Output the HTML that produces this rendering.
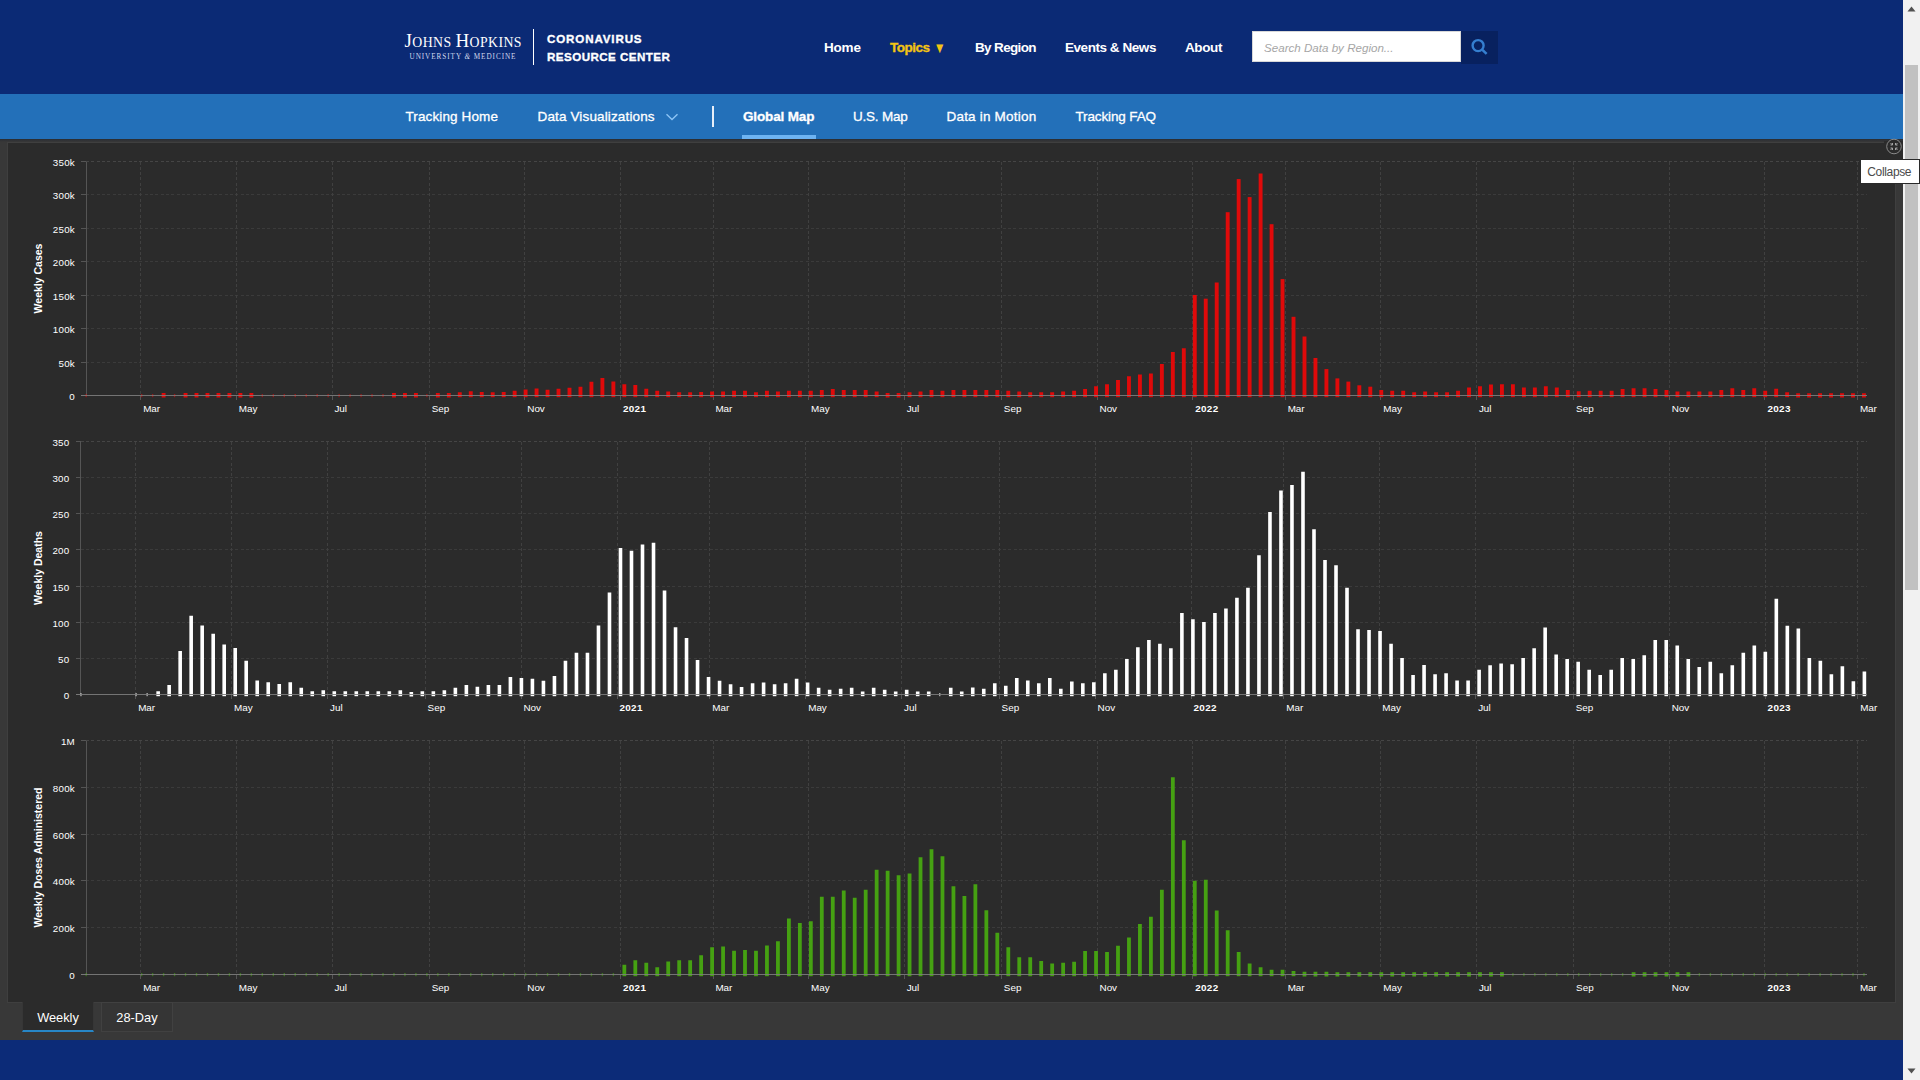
<!DOCTYPE html>
<html lang="en">
<head>
<meta charset="utf-8">
<title>COVID-19 Map - Johns Hopkins Coronavirus Resource Center</title>
<style>
html,body{margin:0;padding:0;}
body{width:1920px;height:1080px;overflow:hidden;position:relative;background:#383838;font-family:"Liberation Sans",sans-serif;color:#fff;}
.abs{position:absolute;}
#top{left:0;top:0;width:1903px;height:94px;background:#0b2a75;}
#sub{left:0;top:94px;width:1903px;height:45px;background:#2370b9;}
#shadow{left:0;top:139px;width:1903px;height:3px;background:linear-gradient(#2a2d33,#383838);}
#foot{left:0;top:1040px;width:1903px;height:40px;background:#0c2b78;}
#panel{left:7px;top:142px;width:1889px;height:861px;background:#2b2b2b;border:1px solid #3f3f3f;box-sizing:border-box;}
#scroll{left:1903px;top:0;width:17px;height:1080px;background:#f1f1f1;}
#thumb{left:1905px;top:65px;width:13px;height:525px;background:#c1c1c1;}
.nav1{top:39.5px;font-size:13.5px;font-weight:bold;line-height:16px;white-space:nowrap;letter-spacing:-0.2px;}
.nav2{top:108.5px;font-size:13.5px;line-height:16px;white-space:nowrap;letter-spacing:-0.15px;-webkit-text-stroke:0.3px #fff;}
.nav2.act{font-weight:bold;-webkit-text-stroke:0.3px #fff;}
svg text{font-family:"Liberation Sans",sans-serif;fill:#fff;}
.g{stroke:#3b3b3b;stroke-width:1;stroke-dasharray:3 2.33;shape-rendering:crispEdges;}
.g.t{stroke:#454545;}
.g.v{stroke:#404040;}
.a{stroke:#555555;stroke-width:1;shape-rendering:crispEdges;}
.a.x{stroke:#7c7c7c;opacity:0.9;}
.yl{font-size:9.8px;letter-spacing:0.25px;text-anchor:end;}
.xl{font-size:9.9px;}
.b{font-weight:bold;font-size:9.9px;letter-spacing:0.35px;}
.yt{font-size:10.5px;text-anchor:middle;font-weight:bold;}
.tab{top:1002px;height:30px;box-sizing:border-box;font-size:12.8px;line-height:31px;text-align:center;color:#fff;}
</style>
</head>
<body>
<div id="top" class="abs"></div>
<div id="sub" class="abs"></div>
<div id="shadow" class="abs"></div>

<!-- logo -->
<div class="abs" style="left:404.5px;top:32.3px;width:120px;height:18px;font-family:'Liberation Serif',serif;white-space:nowrap;line-height:18px;color:#fff;letter-spacing:0.42px;"><span style="font-size:19px;">J</span><span style="font-size:13.8px;">OHNS </span><span style="font-size:19px;">H</span><span style="font-size:13.8px;">OPKINS</span></div>
<div class="abs" style="left:409.5px;top:51.6px;width:110px;height:10px;font-family:'Liberation Serif',serif;font-size:7.2px;line-height:10px;white-space:nowrap;letter-spacing:0.94px;color:#d3daee;">UNIVERSITY <i>&amp;</i> MEDICINE</div>
<div class="abs" style="left:533px;top:29px;width:1px;height:36px;background:#fff;"></div>
<div class="abs" style="left:547px;top:30.3px;font-size:11.6px;font-weight:bold;-webkit-text-stroke:0.35px #fff;line-height:18px;white-space:nowrap;"><span style="letter-spacing:0.85px;">CORONAVIRUS</span><br><span style="letter-spacing:0.45px;">RESOURCE CENTER</span></div>

<!-- top nav -->
<div class="abs nav1" style="left:824px;">Home</div>
<div class="abs nav1" style="left:890px;color:#f2c413;letter-spacing:-0.5px;-webkit-text-stroke:0.35px #f2c413;">Topics <span style="font-size:12px;display:inline-block;transform:scale(1,1.25);position:relative;top:0.3px;letter-spacing:0;margin-left:1px;-webkit-text-stroke:0;">&#9660;</span></div>
<div class="abs nav1" style="left:975px;letter-spacing:-0.65px;">By Region</div>
<div class="abs nav1" style="left:1065px;letter-spacing:-0.45px;">Events &amp; News</div>
<div class="abs nav1" style="left:1185px;letter-spacing:-0.4px;">About</div>
<div class="abs" style="left:1252px;top:31px;width:209px;height:31px;background:#fff;box-sizing:border-box;border:1px solid #d8d8d8;"></div>
<div class="abs" style="left:1264px;top:39.6px;font-size:11.6px;font-style:italic;color:#a6a6a6;line-height:15px;white-space:nowrap;">Search Data by Region...</div>
<div class="abs" style="left:1461px;top:31px;width:37.3px;height:32.7px;background:#08215f;"></div>
<svg class="abs" style="left:1470px;top:38px;" width="20" height="20" viewBox="0 0 20 20"><circle cx="8.1" cy="7.6" r="5.5" fill="none" stroke="#357fd0" stroke-width="2.4"/><line x1="12.4" y1="11.9" x2="16.6" y2="15.9" stroke="#357fd0" stroke-width="2.6"/></svg>

<!-- sub nav -->
<div class="abs nav2" style="left:405.5px;letter-spacing:0.12px;">Tracking Home</div>
<div class="abs nav2" style="left:537.5px;letter-spacing:0.14px;">Data Visualizations</div>
<svg class="abs" style="left:664px;top:111px;" width="16" height="12" viewBox="0 0 16 12"><path d="M2.5 3.2 L8 8.5 L13.5 3.2" fill="none" stroke="#8cc4f5" stroke-width="1.4"/></svg>
<div class="abs" style="left:712px;top:106px;width:2px;height:21px;background:#e6eef8;"></div>
<div class="abs nav2 act" style="left:743px;">Global Map</div>
<div class="abs" style="left:742px;top:135px;width:74px;height:4px;background:#6db3f2;"></div>
<div class="abs nav2" style="left:853px;letter-spacing:-0.22px;">U.S. Map</div>
<div class="abs nav2" style="left:946.5px;letter-spacing:0.2px;">Data in Motion</div>
<div class="abs nav2" style="left:1075.5px;letter-spacing:-0.13px;">Tracking FAQ</div>

<!-- panel -->
<div id="panel" class="abs"></div>
<svg class="abs" style="left:0;top:0;" width="1903" height="1080" viewBox="0 0 1903 1080">
<line x1="81" y1="395.5" x2="86" y2="395.5" class="a"/>
<text x="75" y="400" class="yl">0</text>
<line x1="86" y1="362.07" x2="1866.5" y2="362.07" class="g"/>
<line x1="81" y1="362.07" x2="86" y2="362.07" class="a"/>
<text x="75" y="366.57" class="yl">50k</text>
<line x1="86" y1="328.64" x2="1866.5" y2="328.64" class="g"/>
<line x1="81" y1="328.64" x2="86" y2="328.64" class="a"/>
<text x="75" y="333.14" class="yl">100k</text>
<line x1="86" y1="295.21" x2="1866.5" y2="295.21" class="g"/>
<line x1="81" y1="295.21" x2="86" y2="295.21" class="a"/>
<text x="75" y="299.71" class="yl">150k</text>
<line x1="86" y1="261.79" x2="1866.5" y2="261.79" class="g"/>
<line x1="81" y1="261.79" x2="86" y2="261.79" class="a"/>
<text x="75" y="266.29" class="yl">200k</text>
<line x1="86" y1="228.36" x2="1866.5" y2="228.36" class="g"/>
<line x1="81" y1="228.36" x2="86" y2="228.36" class="a"/>
<text x="75" y="232.86" class="yl">250k</text>
<line x1="86" y1="194.93" x2="1866.5" y2="194.93" class="g"/>
<line x1="81" y1="194.93" x2="86" y2="194.93" class="a"/>
<text x="75" y="199.43" class="yl">300k</text>
<line x1="86" y1="161.5" x2="1866.5" y2="161.5" class="g t"/>
<line x1="81" y1="161.5" x2="86" y2="161.5" class="a"/>
<text x="75" y="166" class="yl">350k</text>
<line x1="140.75" y1="161.5" x2="140.75" y2="395.5" class="g v"/>
<line x1="140.75" y1="395.5" x2="140.75" y2="400" class="a"/>
<text x="143.15" y="412.2" class="xl">Mar</text>
<line x1="236.39" y1="161.5" x2="236.39" y2="395.5" class="g v"/>
<line x1="236.39" y1="395.5" x2="236.39" y2="400" class="a"/>
<text x="238.79" y="412.2" class="xl">May</text>
<line x1="332.02" y1="161.5" x2="332.02" y2="395.5" class="g v"/>
<line x1="332.02" y1="395.5" x2="332.02" y2="400" class="a"/>
<text x="334.42" y="412.2" class="xl">Jul</text>
<line x1="429.23" y1="161.5" x2="429.23" y2="395.5" class="g v"/>
<line x1="429.23" y1="395.5" x2="429.23" y2="400" class="a"/>
<text x="431.63" y="412.2" class="xl">Sep</text>
<line x1="524.86" y1="161.5" x2="524.86" y2="395.5" class="g v"/>
<line x1="524.86" y1="395.5" x2="524.86" y2="400" class="a"/>
<text x="527.26" y="412.2" class="xl">Nov</text>
<line x1="620.5" y1="161.5" x2="620.5" y2="395.5" class="g v"/>
<line x1="620.5" y1="395.5" x2="620.5" y2="400" class="a"/>
<text x="622.9" y="412.2" class="xl b">2021</text>
<line x1="713" y1="161.5" x2="713" y2="395.5" class="g v"/>
<line x1="713" y1="395.5" x2="713" y2="400" class="a"/>
<text x="715.4" y="412.2" class="xl">Mar</text>
<line x1="808.63" y1="161.5" x2="808.63" y2="395.5" class="g v"/>
<line x1="808.63" y1="395.5" x2="808.63" y2="400" class="a"/>
<text x="811.03" y="412.2" class="xl">May</text>
<line x1="904.27" y1="161.5" x2="904.27" y2="395.5" class="g v"/>
<line x1="904.27" y1="395.5" x2="904.27" y2="400" class="a"/>
<text x="906.67" y="412.2" class="xl">Jul</text>
<line x1="1001.47" y1="161.5" x2="1001.47" y2="395.5" class="g v"/>
<line x1="1001.47" y1="395.5" x2="1001.47" y2="400" class="a"/>
<text x="1003.87" y="412.2" class="xl">Sep</text>
<line x1="1097.11" y1="161.5" x2="1097.11" y2="395.5" class="g v"/>
<line x1="1097.11" y1="395.5" x2="1097.11" y2="400" class="a"/>
<text x="1099.51" y="412.2" class="xl">Nov</text>
<line x1="1192.74" y1="161.5" x2="1192.74" y2="395.5" class="g v"/>
<line x1="1192.74" y1="395.5" x2="1192.74" y2="400" class="a"/>
<text x="1195.14" y="412.2" class="xl b">2022</text>
<line x1="1285.24" y1="161.5" x2="1285.24" y2="395.5" class="g v"/>
<line x1="1285.24" y1="395.5" x2="1285.24" y2="400" class="a"/>
<text x="1287.64" y="412.2" class="xl">Mar</text>
<line x1="1380.88" y1="161.5" x2="1380.88" y2="395.5" class="g v"/>
<line x1="1380.88" y1="395.5" x2="1380.88" y2="400" class="a"/>
<text x="1383.28" y="412.2" class="xl">May</text>
<line x1="1476.52" y1="161.5" x2="1476.52" y2="395.5" class="g v"/>
<line x1="1476.52" y1="395.5" x2="1476.52" y2="400" class="a"/>
<text x="1478.92" y="412.2" class="xl">Jul</text>
<line x1="1573.72" y1="161.5" x2="1573.72" y2="395.5" class="g v"/>
<line x1="1573.72" y1="395.5" x2="1573.72" y2="400" class="a"/>
<text x="1576.12" y="412.2" class="xl">Sep</text>
<line x1="1669.36" y1="161.5" x2="1669.36" y2="395.5" class="g v"/>
<line x1="1669.36" y1="395.5" x2="1669.36" y2="400" class="a"/>
<text x="1671.76" y="412.2" class="xl">Nov</text>
<line x1="1764.99" y1="161.5" x2="1764.99" y2="395.5" class="g v"/>
<line x1="1764.99" y1="395.5" x2="1764.99" y2="400" class="a"/>
<text x="1767.39" y="412.2" class="xl b">2023</text>
<line x1="1857.49" y1="161.5" x2="1857.49" y2="395.5" class="g v"/>
<line x1="1857.49" y1="395.5" x2="1857.49" y2="400" class="a"/>
<text x="1859.89" y="412.2" class="xl">Mar</text>
<line x1="86" y1="161.5" x2="86" y2="395.5" class="a"/>
<text transform="translate(42,278.5) rotate(-90)" class="yt">Weekly Cases</text>
<g fill="#e00a0a">
<rect x="85.5" y="394" width="1.4" height="3.2" opacity="0.6"/>
<rect x="140.96" y="394" width="1.4" height="3.2" opacity="0.6"/>
<rect x="151.93" y="394" width="1.4" height="3.2" opacity="0.6"/>
<rect x="161.65" y="393" width="3.9" height="4.5"/>
<rect x="173.87" y="394" width="1.4" height="3.2" opacity="0.6"/>
<rect x="183.59" y="393" width="3.9" height="4.5"/>
<rect x="194.56" y="393" width="3.9" height="4.5"/>
<rect x="205.53" y="393" width="3.9" height="4.5"/>
<rect x="216.5" y="393" width="3.9" height="4.5"/>
<rect x="227.47" y="393" width="3.9" height="4.5"/>
<rect x="238.44" y="393" width="3.9" height="4.5"/>
<rect x="249.41" y="393" width="3.9" height="4.5"/>
<rect x="261.63" y="394" width="1.4" height="3.2" opacity="0.6"/>
<rect x="272.6" y="394" width="1.4" height="3.2" opacity="0.6"/>
<rect x="283.57" y="394" width="1.4" height="3.2" opacity="0.6"/>
<rect x="294.54" y="394" width="1.4" height="3.2" opacity="0.6"/>
<rect x="305.51" y="394" width="1.4" height="3.2" opacity="0.6"/>
<rect x="316.48" y="394" width="1.4" height="3.2" opacity="0.6"/>
<rect x="327.45" y="394" width="1.4" height="3.2" opacity="0.6"/>
<rect x="338.42" y="394" width="1.4" height="3.2" opacity="0.6"/>
<rect x="349.39" y="394" width="1.4" height="3.2" opacity="0.6"/>
<rect x="360.36" y="394" width="1.4" height="3.2" opacity="0.6"/>
<rect x="371.33" y="394" width="1.4" height="3.2" opacity="0.6"/>
<rect x="382.3" y="394" width="1.4" height="3.2" opacity="0.6"/>
<rect x="392.02" y="393" width="3.9" height="4.5"/>
<rect x="402.99" y="393" width="3.9" height="4.5"/>
<rect x="413.96" y="393" width="3.9" height="4.5"/>
<rect x="426.18" y="394" width="1.4" height="3.2" opacity="0.6"/>
<rect x="435.9" y="393" width="3.9" height="4.5"/>
<rect x="446.87" y="393" width="3.9" height="4.5"/>
<rect x="457.84" y="392.25" width="3.9" height="4.95"/>
<rect x="468.81" y="391.25" width="3.9" height="5.95"/>
<rect x="479.78" y="392" width="3.9" height="5.2"/>
<rect x="490.75" y="392.25" width="3.9" height="4.95"/>
<rect x="501.72" y="392" width="3.9" height="5.2"/>
<rect x="512.69" y="390.75" width="3.9" height="6.45"/>
<rect x="523.66" y="389.5" width="3.9" height="7.7"/>
<rect x="534.63" y="388.5" width="3.9" height="8.7"/>
<rect x="545.6" y="389.75" width="3.9" height="7.45"/>
<rect x="556.57" y="388.75" width="3.9" height="8.45"/>
<rect x="567.54" y="387.75" width="3.9" height="9.45"/>
<rect x="578.51" y="386.75" width="3.9" height="10.45"/>
<rect x="589.48" y="381.75" width="3.9" height="15.45"/>
<rect x="600.45" y="378" width="3.9" height="19.2"/>
<rect x="611.42" y="381.5" width="3.9" height="15.7"/>
<rect x="622.39" y="384.25" width="3.9" height="12.95"/>
<rect x="633.36" y="385" width="3.9" height="12.2"/>
<rect x="644.33" y="388.75" width="3.9" height="8.45"/>
<rect x="655.3" y="390.75" width="3.9" height="6.45"/>
<rect x="666.27" y="391.5" width="3.9" height="5.7"/>
<rect x="677.24" y="392.25" width="3.9" height="4.95"/>
<rect x="688.21" y="392.25" width="3.9" height="4.95"/>
<rect x="699.18" y="392" width="3.9" height="5.2"/>
<rect x="710.15" y="391.5" width="3.9" height="5.7"/>
<rect x="721.12" y="391.5" width="3.9" height="5.7"/>
<rect x="732.09" y="390.75" width="3.9" height="6.45"/>
<rect x="743.06" y="390.75" width="3.9" height="6.45"/>
<rect x="754.03" y="392.25" width="3.9" height="4.95"/>
<rect x="765" y="390.75" width="3.9" height="6.45"/>
<rect x="775.97" y="391.5" width="3.9" height="5.7"/>
<rect x="786.94" y="390.75" width="3.9" height="6.45"/>
<rect x="797.91" y="390.75" width="3.9" height="6.45"/>
<rect x="808.88" y="390.75" width="3.9" height="6.45"/>
<rect x="819.85" y="390" width="3.9" height="7.2"/>
<rect x="830.82" y="389" width="3.9" height="8.2"/>
<rect x="841.79" y="390" width="3.9" height="7.2"/>
<rect x="852.76" y="390" width="3.9" height="7.2"/>
<rect x="863.73" y="390" width="3.9" height="7.2"/>
<rect x="874.7" y="391.5" width="3.9" height="5.7"/>
<rect x="885.67" y="393" width="3.9" height="4.5"/>
<rect x="896.64" y="393" width="3.9" height="4.5"/>
<rect x="907.61" y="392.25" width="3.9" height="4.95"/>
<rect x="918.58" y="391.5" width="3.9" height="5.7"/>
<rect x="929.55" y="390" width="3.9" height="7.2"/>
<rect x="940.52" y="390.75" width="3.9" height="6.45"/>
<rect x="951.49" y="390" width="3.9" height="7.2"/>
<rect x="962.46" y="390" width="3.9" height="7.2"/>
<rect x="973.43" y="390" width="3.9" height="7.2"/>
<rect x="984.4" y="390" width="3.9" height="7.2"/>
<rect x="995.37" y="390" width="3.9" height="7.2"/>
<rect x="1006.34" y="390.75" width="3.9" height="6.45"/>
<rect x="1017.31" y="391.5" width="3.9" height="5.7"/>
<rect x="1028.28" y="392.25" width="3.9" height="4.95"/>
<rect x="1039.25" y="392.25" width="3.9" height="4.95"/>
<rect x="1050.22" y="392.25" width="3.9" height="4.95"/>
<rect x="1061.19" y="391.5" width="3.9" height="5.7"/>
<rect x="1072.16" y="390.75" width="3.9" height="6.45"/>
<rect x="1083.13" y="389" width="3.9" height="8.2"/>
<rect x="1094.1" y="386.25" width="3.9" height="10.95"/>
<rect x="1105.07" y="384.25" width="3.9" height="12.95"/>
<rect x="1116.04" y="380" width="3.9" height="17.2"/>
<rect x="1127.01" y="376.25" width="3.9" height="20.95"/>
<rect x="1137.98" y="374.5" width="3.9" height="22.7"/>
<rect x="1148.95" y="373.5" width="3.9" height="23.7"/>
<rect x="1159.92" y="364" width="3.9" height="33.2"/>
<rect x="1170.89" y="352" width="3.9" height="45.2"/>
<rect x="1181.86" y="348.25" width="3.9" height="48.95"/>
<rect x="1192.83" y="295" width="3.9" height="102.2"/>
<rect x="1203.8" y="298.7" width="3.9" height="98.5"/>
<rect x="1214.77" y="282.5" width="3.9" height="114.7"/>
<rect x="1225.74" y="212.2" width="3.9" height="185"/>
<rect x="1236.71" y="179.1" width="3.9" height="218.1"/>
<rect x="1247.68" y="197.1" width="3.9" height="200.1"/>
<rect x="1258.65" y="173.5" width="3.9" height="223.7"/>
<rect x="1269.62" y="224.2" width="3.9" height="173"/>
<rect x="1280.59" y="279.1" width="3.9" height="118.1"/>
<rect x="1291.56" y="316.8" width="3.9" height="80.4"/>
<rect x="1302.53" y="336.5" width="3.9" height="60.7"/>
<rect x="1313.5" y="358" width="3.9" height="39.2"/>
<rect x="1324.47" y="369.1" width="3.9" height="28.1"/>
<rect x="1335.44" y="378.4" width="3.9" height="18.8"/>
<rect x="1346.41" y="381.6" width="3.9" height="15.6"/>
<rect x="1357.38" y="385.3" width="3.9" height="11.9"/>
<rect x="1368.35" y="386.7" width="3.9" height="10.5"/>
<rect x="1379.32" y="390" width="3.9" height="7.2"/>
<rect x="1390.29" y="390.75" width="3.9" height="6.45"/>
<rect x="1401.26" y="390.75" width="3.9" height="6.45"/>
<rect x="1412.23" y="392.25" width="3.9" height="4.95"/>
<rect x="1423.2" y="391.5" width="3.9" height="5.7"/>
<rect x="1434.17" y="392.25" width="3.9" height="4.95"/>
<rect x="1445.14" y="392.25" width="3.9" height="4.95"/>
<rect x="1456.11" y="390.75" width="3.9" height="6.45"/>
<rect x="1467.08" y="387.5" width="3.9" height="9.7"/>
<rect x="1478.05" y="386.25" width="3.9" height="10.95"/>
<rect x="1489.02" y="384.5" width="3.9" height="12.7"/>
<rect x="1499.99" y="384.25" width="3.9" height="12.95"/>
<rect x="1510.96" y="384.25" width="3.9" height="12.95"/>
<rect x="1521.93" y="387.5" width="3.9" height="9.7"/>
<rect x="1532.9" y="387.5" width="3.9" height="9.7"/>
<rect x="1543.87" y="386.25" width="3.9" height="10.95"/>
<rect x="1554.84" y="387.5" width="3.9" height="9.7"/>
<rect x="1565.81" y="390" width="3.9" height="7.2"/>
<rect x="1576.78" y="391.25" width="3.9" height="5.95"/>
<rect x="1587.75" y="390.75" width="3.9" height="6.45"/>
<rect x="1598.72" y="390.75" width="3.9" height="6.45"/>
<rect x="1609.69" y="390.75" width="3.9" height="6.45"/>
<rect x="1620.66" y="389" width="3.9" height="8.2"/>
<rect x="1631.63" y="388.25" width="3.9" height="8.95"/>
<rect x="1642.6" y="388.25" width="3.9" height="8.95"/>
<rect x="1653.57" y="389" width="3.9" height="8.2"/>
<rect x="1664.54" y="390" width="3.9" height="7.2"/>
<rect x="1675.51" y="391.5" width="3.9" height="5.7"/>
<rect x="1686.48" y="391.5" width="3.9" height="5.7"/>
<rect x="1697.45" y="391.5" width="3.9" height="5.7"/>
<rect x="1708.42" y="391.5" width="3.9" height="5.7"/>
<rect x="1719.39" y="390" width="3.9" height="7.2"/>
<rect x="1730.36" y="388.25" width="3.9" height="8.95"/>
<rect x="1741.33" y="390" width="3.9" height="7.2"/>
<rect x="1752.3" y="388.25" width="3.9" height="8.95"/>
<rect x="1763.27" y="390.75" width="3.9" height="6.45"/>
<rect x="1774.24" y="388.75" width="3.9" height="8.45"/>
<rect x="1785.21" y="392.25" width="3.9" height="4.95"/>
<rect x="1796.18" y="393.25" width="3.9" height="4.25"/>
<rect x="1807.15" y="393.25" width="3.9" height="4.25"/>
<rect x="1818.12" y="393.25" width="3.9" height="4.25"/>
<rect x="1829.09" y="393.25" width="3.9" height="4.25"/>
<rect x="1840.06" y="393.25" width="3.9" height="4.25"/>
<rect x="1851.03" y="393.25" width="3.9" height="4.25"/>
<rect x="1862" y="393.25" width="3.9" height="4.25"/>
</g>
<line x1="81" y1="395.5" x2="1866.5" y2="395.5" class="a x"/>
<line x1="75.75" y1="694.5" x2="80.75" y2="694.5" class="a"/>
<text x="69.5" y="699" class="yl">0</text>
<line x1="80.75" y1="658.36" x2="1866.5" y2="658.36" class="g"/>
<line x1="75.75" y1="658.36" x2="80.75" y2="658.36" class="a"/>
<text x="69.5" y="662.86" class="yl">50</text>
<line x1="80.75" y1="622.21" x2="1866.5" y2="622.21" class="g"/>
<line x1="75.75" y1="622.21" x2="80.75" y2="622.21" class="a"/>
<text x="69.5" y="626.71" class="yl">100</text>
<line x1="80.75" y1="586.07" x2="1866.5" y2="586.07" class="g"/>
<line x1="75.75" y1="586.07" x2="80.75" y2="586.07" class="a"/>
<text x="69.5" y="590.57" class="yl">150</text>
<line x1="80.75" y1="549.93" x2="1866.5" y2="549.93" class="g"/>
<line x1="75.75" y1="549.93" x2="80.75" y2="549.93" class="a"/>
<text x="69.5" y="554.43" class="yl">200</text>
<line x1="80.75" y1="513.79" x2="1866.5" y2="513.79" class="g"/>
<line x1="75.75" y1="513.79" x2="80.75" y2="513.79" class="a"/>
<text x="69.5" y="518.29" class="yl">250</text>
<line x1="80.75" y1="477.64" x2="1866.5" y2="477.64" class="g"/>
<line x1="75.75" y1="477.64" x2="80.75" y2="477.64" class="a"/>
<text x="69.5" y="482.14" class="yl">300</text>
<line x1="80.75" y1="441.5" x2="1866.5" y2="441.5" class="g t"/>
<line x1="75.75" y1="441.5" x2="80.75" y2="441.5" class="a"/>
<text x="69.5" y="446" class="yl">350</text>
<line x1="135.75" y1="441.5" x2="135.75" y2="694.5" class="g v"/>
<line x1="135.75" y1="694.5" x2="135.75" y2="699" class="a"/>
<text x="138.15" y="711.2" class="xl">Mar</text>
<line x1="231.69" y1="441.5" x2="231.69" y2="694.5" class="g v"/>
<line x1="231.69" y1="694.5" x2="231.69" y2="699" class="a"/>
<text x="234.09" y="711.2" class="xl">May</text>
<line x1="327.63" y1="441.5" x2="327.63" y2="694.5" class="g v"/>
<line x1="327.63" y1="694.5" x2="327.63" y2="699" class="a"/>
<text x="330.03" y="711.2" class="xl">Jul</text>
<line x1="425.15" y1="441.5" x2="425.15" y2="694.5" class="g v"/>
<line x1="425.15" y1="694.5" x2="425.15" y2="699" class="a"/>
<text x="427.55" y="711.2" class="xl">Sep</text>
<line x1="521.09" y1="441.5" x2="521.09" y2="694.5" class="g v"/>
<line x1="521.09" y1="694.5" x2="521.09" y2="699" class="a"/>
<text x="523.49" y="711.2" class="xl">Nov</text>
<line x1="617.03" y1="441.5" x2="617.03" y2="694.5" class="g v"/>
<line x1="617.03" y1="694.5" x2="617.03" y2="699" class="a"/>
<text x="619.43" y="711.2" class="xl b">2021</text>
<line x1="709.82" y1="441.5" x2="709.82" y2="694.5" class="g v"/>
<line x1="709.82" y1="694.5" x2="709.82" y2="699" class="a"/>
<text x="712.22" y="711.2" class="xl">Mar</text>
<line x1="805.76" y1="441.5" x2="805.76" y2="694.5" class="g v"/>
<line x1="805.76" y1="694.5" x2="805.76" y2="699" class="a"/>
<text x="808.16" y="711.2" class="xl">May</text>
<line x1="901.7" y1="441.5" x2="901.7" y2="694.5" class="g v"/>
<line x1="901.7" y1="694.5" x2="901.7" y2="699" class="a"/>
<text x="904.1" y="711.2" class="xl">Jul</text>
<line x1="999.22" y1="441.5" x2="999.22" y2="694.5" class="g v"/>
<line x1="999.22" y1="694.5" x2="999.22" y2="699" class="a"/>
<text x="1001.62" y="711.2" class="xl">Sep</text>
<line x1="1095.16" y1="441.5" x2="1095.16" y2="694.5" class="g v"/>
<line x1="1095.16" y1="694.5" x2="1095.16" y2="699" class="a"/>
<text x="1097.56" y="711.2" class="xl">Nov</text>
<line x1="1191.1" y1="441.5" x2="1191.1" y2="694.5" class="g v"/>
<line x1="1191.1" y1="694.5" x2="1191.1" y2="699" class="a"/>
<text x="1193.5" y="711.2" class="xl b">2022</text>
<line x1="1283.89" y1="441.5" x2="1283.89" y2="694.5" class="g v"/>
<line x1="1283.89" y1="694.5" x2="1283.89" y2="699" class="a"/>
<text x="1286.29" y="711.2" class="xl">Mar</text>
<line x1="1379.83" y1="441.5" x2="1379.83" y2="694.5" class="g v"/>
<line x1="1379.83" y1="694.5" x2="1379.83" y2="699" class="a"/>
<text x="1382.23" y="711.2" class="xl">May</text>
<line x1="1475.78" y1="441.5" x2="1475.78" y2="694.5" class="g v"/>
<line x1="1475.78" y1="694.5" x2="1475.78" y2="699" class="a"/>
<text x="1478.18" y="711.2" class="xl">Jul</text>
<line x1="1573.29" y1="441.5" x2="1573.29" y2="694.5" class="g v"/>
<line x1="1573.29" y1="694.5" x2="1573.29" y2="699" class="a"/>
<text x="1575.69" y="711.2" class="xl">Sep</text>
<line x1="1669.23" y1="441.5" x2="1669.23" y2="694.5" class="g v"/>
<line x1="1669.23" y1="694.5" x2="1669.23" y2="699" class="a"/>
<text x="1671.63" y="711.2" class="xl">Nov</text>
<line x1="1765.17" y1="441.5" x2="1765.17" y2="694.5" class="g v"/>
<line x1="1765.17" y1="694.5" x2="1765.17" y2="699" class="a"/>
<text x="1767.57" y="711.2" class="xl b">2023</text>
<line x1="1857.97" y1="441.5" x2="1857.97" y2="694.5" class="g v"/>
<line x1="1857.97" y1="694.5" x2="1857.97" y2="699" class="a"/>
<text x="1860.37" y="711.2" class="xl">Mar</text>
<line x1="80.75" y1="441.5" x2="80.75" y2="694.5" class="a"/>
<text transform="translate(42,568) rotate(-90)" class="yt">Weekly Deaths</text>
<g fill="#ffffff">
<rect x="80.25" y="693" width="1.4" height="3.2" opacity="0.6"/>
<rect x="135.43" y="693" width="1.4" height="3.2" opacity="0.6"/>
<rect x="146.44" y="693" width="1.4" height="3.2" opacity="0.6"/>
<rect x="156.35" y="691.25" width="3.6" height="4.95"/>
<rect x="167.36" y="685" width="3.6" height="11.2"/>
<rect x="178.37" y="651" width="3.6" height="45.2"/>
<rect x="189.37" y="615.75" width="3.6" height="80.45"/>
<rect x="200.38" y="625.5" width="3.6" height="70.7"/>
<rect x="211.39" y="633.75" width="3.6" height="62.45"/>
<rect x="222.4" y="644.5" width="3.6" height="51.7"/>
<rect x="233.41" y="648" width="3.6" height="48.2"/>
<rect x="244.41" y="660.75" width="3.6" height="35.45"/>
<rect x="255.42" y="680.5" width="3.6" height="15.7"/>
<rect x="266.43" y="682.25" width="3.6" height="13.95"/>
<rect x="277.44" y="684" width="3.6" height="12.2"/>
<rect x="288.45" y="682.25" width="3.6" height="13.95"/>
<rect x="299.45" y="687.75" width="3.6" height="8.45"/>
<rect x="310.46" y="691.25" width="3.6" height="4.95"/>
<rect x="321.47" y="690.25" width="3.6" height="5.95"/>
<rect x="332.48" y="691.25" width="3.6" height="4.95"/>
<rect x="343.49" y="691.25" width="3.6" height="4.95"/>
<rect x="354.49" y="691.25" width="3.6" height="4.95"/>
<rect x="365.5" y="691.25" width="3.6" height="4.95"/>
<rect x="376.51" y="691.25" width="3.6" height="4.95"/>
<rect x="387.52" y="691.25" width="3.6" height="4.95"/>
<rect x="398.53" y="690.25" width="3.6" height="5.95"/>
<rect x="409.53" y="692" width="3.6" height="4.5"/>
<rect x="420.54" y="691.25" width="3.6" height="4.95"/>
<rect x="431.55" y="691.25" width="3.6" height="4.95"/>
<rect x="442.56" y="690.25" width="3.6" height="5.95"/>
<rect x="453.57" y="687.75" width="3.6" height="8.45"/>
<rect x="464.57" y="685" width="3.6" height="11.2"/>
<rect x="475.58" y="686.75" width="3.6" height="9.45"/>
<rect x="486.59" y="685" width="3.6" height="11.2"/>
<rect x="497.6" y="685" width="3.6" height="11.2"/>
<rect x="508.61" y="677" width="3.6" height="19.2"/>
<rect x="519.61" y="678" width="3.6" height="18.2"/>
<rect x="530.62" y="678.75" width="3.6" height="17.45"/>
<rect x="541.63" y="680.75" width="3.6" height="15.45"/>
<rect x="552.64" y="676" width="3.6" height="20.2"/>
<rect x="563.65" y="660.75" width="3.6" height="35.45"/>
<rect x="574.65" y="652.75" width="3.6" height="43.45"/>
<rect x="585.66" y="652.75" width="3.6" height="43.45"/>
<rect x="596.67" y="625.5" width="3.6" height="70.7"/>
<rect x="607.68" y="592.5" width="3.6" height="103.7"/>
<rect x="618.69" y="548" width="3.6" height="148.2"/>
<rect x="629.69" y="550.75" width="3.6" height="145.45"/>
<rect x="640.7" y="544.5" width="3.6" height="151.7"/>
<rect x="651.71" y="542.75" width="3.6" height="153.45"/>
<rect x="662.72" y="590.5" width="3.6" height="105.7"/>
<rect x="673.73" y="627.25" width="3.6" height="68.95"/>
<rect x="684.73" y="638" width="3.6" height="58.2"/>
<rect x="695.74" y="660" width="3.6" height="36.2"/>
<rect x="706.75" y="677" width="3.6" height="19.2"/>
<rect x="717.76" y="680.75" width="3.6" height="15.45"/>
<rect x="728.77" y="684.25" width="3.6" height="11.95"/>
<rect x="739.77" y="687" width="3.6" height="9.2"/>
<rect x="750.78" y="683.25" width="3.6" height="12.95"/>
<rect x="761.79" y="682.5" width="3.6" height="13.7"/>
<rect x="772.8" y="684.25" width="3.6" height="11.95"/>
<rect x="783.81" y="683.25" width="3.6" height="12.95"/>
<rect x="794.81" y="678.75" width="3.6" height="17.45"/>
<rect x="805.82" y="682.5" width="3.6" height="13.7"/>
<rect x="816.83" y="687.75" width="3.6" height="8.45"/>
<rect x="827.84" y="689.75" width="3.6" height="6.45"/>
<rect x="838.85" y="688.75" width="3.6" height="7.45"/>
<rect x="849.85" y="687.75" width="3.6" height="8.45"/>
<rect x="860.86" y="691.5" width="3.6" height="4.7"/>
<rect x="871.87" y="687.75" width="3.6" height="8.45"/>
<rect x="882.88" y="689.75" width="3.6" height="6.45"/>
<rect x="893.89" y="691.5" width="3.6" height="4.7"/>
<rect x="904.89" y="689.75" width="3.6" height="6.45"/>
<rect x="915.9" y="691.5" width="3.6" height="4.7"/>
<rect x="926.91" y="691.5" width="3.6" height="4.7"/>
<rect x="939.02" y="693" width="1.4" height="3.2" opacity="0.6"/>
<rect x="948.93" y="687.75" width="3.6" height="8.45"/>
<rect x="959.93" y="691.5" width="3.6" height="4.7"/>
<rect x="970.94" y="687.5" width="3.6" height="8.7"/>
<rect x="981.95" y="688.75" width="3.6" height="7.45"/>
<rect x="992.96" y="683.25" width="3.6" height="12.95"/>
<rect x="1003.97" y="685.75" width="3.6" height="10.45"/>
<rect x="1014.97" y="678" width="3.6" height="18.2"/>
<rect x="1025.98" y="680.5" width="3.6" height="15.7"/>
<rect x="1036.99" y="683.25" width="3.6" height="12.95"/>
<rect x="1048" y="678" width="3.6" height="18.2"/>
<rect x="1059.01" y="688.75" width="3.6" height="7.45"/>
<rect x="1070.01" y="681.5" width="3.6" height="14.7"/>
<rect x="1081.02" y="683.25" width="3.6" height="12.95"/>
<rect x="1092.03" y="682.25" width="3.6" height="13.95"/>
<rect x="1103.04" y="673.25" width="3.6" height="22.95"/>
<rect x="1114.05" y="669.75" width="3.6" height="26.45"/>
<rect x="1125.05" y="659" width="3.6" height="37.2"/>
<rect x="1136.06" y="647.25" width="3.6" height="48.95"/>
<rect x="1147.07" y="640" width="3.6" height="56.2"/>
<rect x="1158.08" y="643.75" width="3.6" height="52.45"/>
<rect x="1169.09" y="648.25" width="3.6" height="47.95"/>
<rect x="1180.09" y="613" width="3.6" height="83.2"/>
<rect x="1191.1" y="619.25" width="3.6" height="76.95"/>
<rect x="1202.11" y="622" width="3.6" height="74.2"/>
<rect x="1213.12" y="613" width="3.6" height="83.2"/>
<rect x="1224.13" y="608.5" width="3.6" height="87.7"/>
<rect x="1235.13" y="597.75" width="3.6" height="98.45"/>
<rect x="1246.14" y="587.75" width="3.6" height="108.45"/>
<rect x="1257.15" y="555.25" width="3.6" height="140.95"/>
<rect x="1268.16" y="512" width="3.6" height="184.2"/>
<rect x="1279.17" y="490.5" width="3.6" height="205.7"/>
<rect x="1290.17" y="485" width="3.6" height="211.2"/>
<rect x="1301.18" y="471.75" width="3.6" height="224.45"/>
<rect x="1312.19" y="529.25" width="3.6" height="166.95"/>
<rect x="1323.2" y="560" width="3.6" height="136.2"/>
<rect x="1334.21" y="565.25" width="3.6" height="130.95"/>
<rect x="1345.21" y="587.75" width="3.6" height="108.45"/>
<rect x="1356.22" y="629.25" width="3.6" height="66.95"/>
<rect x="1367.23" y="630" width="3.6" height="66.2"/>
<rect x="1378.24" y="631" width="3.6" height="65.2"/>
<rect x="1389.25" y="643.75" width="3.6" height="52.45"/>
<rect x="1400.25" y="658" width="3.6" height="38.2"/>
<rect x="1411.26" y="675" width="3.6" height="21.2"/>
<rect x="1422.27" y="665" width="3.6" height="31.2"/>
<rect x="1433.28" y="674.25" width="3.6" height="21.95"/>
<rect x="1444.29" y="673.25" width="3.6" height="22.95"/>
<rect x="1455.29" y="680.5" width="3.6" height="15.7"/>
<rect x="1466.3" y="680.5" width="3.6" height="15.7"/>
<rect x="1477.31" y="669.75" width="3.6" height="26.45"/>
<rect x="1488.32" y="665.25" width="3.6" height="30.95"/>
<rect x="1499.33" y="663.5" width="3.6" height="32.7"/>
<rect x="1510.33" y="664.25" width="3.6" height="31.95"/>
<rect x="1521.34" y="658" width="3.6" height="38.2"/>
<rect x="1532.35" y="648.25" width="3.6" height="47.95"/>
<rect x="1543.36" y="627.5" width="3.6" height="68.7"/>
<rect x="1554.37" y="654.5" width="3.6" height="41.7"/>
<rect x="1565.37" y="659" width="3.6" height="37.2"/>
<rect x="1576.38" y="661.75" width="3.6" height="34.45"/>
<rect x="1587.39" y="669.75" width="3.6" height="26.45"/>
<rect x="1598.4" y="675" width="3.6" height="21.2"/>
<rect x="1609.41" y="669.75" width="3.6" height="26.45"/>
<rect x="1620.41" y="658" width="3.6" height="38.2"/>
<rect x="1631.42" y="659" width="3.6" height="37.2"/>
<rect x="1642.43" y="655.25" width="3.6" height="40.95"/>
<rect x="1653.44" y="640" width="3.6" height="56.2"/>
<rect x="1664.45" y="640" width="3.6" height="56.2"/>
<rect x="1675.45" y="645.5" width="3.6" height="50.7"/>
<rect x="1686.46" y="659" width="3.6" height="37.2"/>
<rect x="1697.47" y="667" width="3.6" height="29.2"/>
<rect x="1708.48" y="661.75" width="3.6" height="34.45"/>
<rect x="1719.49" y="673.25" width="3.6" height="22.95"/>
<rect x="1730.49" y="665.25" width="3.6" height="30.95"/>
<rect x="1741.5" y="652.75" width="3.6" height="43.45"/>
<rect x="1752.51" y="645.5" width="3.6" height="50.7"/>
<rect x="1763.52" y="651.75" width="3.6" height="44.45"/>
<rect x="1774.53" y="598.75" width="3.6" height="97.45"/>
<rect x="1785.53" y="625.75" width="3.6" height="70.45"/>
<rect x="1796.54" y="628.5" width="3.6" height="67.7"/>
<rect x="1807.55" y="658" width="3.6" height="38.2"/>
<rect x="1818.56" y="660.75" width="3.6" height="35.45"/>
<rect x="1829.57" y="674.25" width="3.6" height="21.95"/>
<rect x="1840.57" y="666.25" width="3.6" height="29.95"/>
<rect x="1851.58" y="681.25" width="3.6" height="14.95"/>
<rect x="1862.59" y="671.5" width="3.6" height="24.7"/>
</g>
<line x1="75.75" y1="694.5" x2="1866.5" y2="694.5" class="a x"/>
<line x1="81" y1="974.5" x2="86" y2="974.5" class="a"/>
<text x="75" y="979" class="yl">0</text>
<line x1="86" y1="927.7" x2="1866.5" y2="927.7" class="g"/>
<line x1="81" y1="927.7" x2="86" y2="927.7" class="a"/>
<text x="75" y="932.2" class="yl">200k</text>
<line x1="86" y1="880.9" x2="1866.5" y2="880.9" class="g"/>
<line x1="81" y1="880.9" x2="86" y2="880.9" class="a"/>
<text x="75" y="885.4" class="yl">400k</text>
<line x1="86" y1="834.1" x2="1866.5" y2="834.1" class="g"/>
<line x1="81" y1="834.1" x2="86" y2="834.1" class="a"/>
<text x="75" y="838.6" class="yl">600k</text>
<line x1="86" y1="787.3" x2="1866.5" y2="787.3" class="g"/>
<line x1="81" y1="787.3" x2="86" y2="787.3" class="a"/>
<text x="75" y="791.8" class="yl">800k</text>
<line x1="86" y1="740.5" x2="1866.5" y2="740.5" class="g t"/>
<line x1="81" y1="740.5" x2="86" y2="740.5" class="a"/>
<text x="75" y="745" class="yl">1M</text>
<line x1="140.75" y1="740.5" x2="140.75" y2="974.5" class="g v"/>
<line x1="140.75" y1="974.5" x2="140.75" y2="979" class="a"/>
<text x="143.15" y="991.2" class="xl">Mar</text>
<line x1="236.39" y1="740.5" x2="236.39" y2="974.5" class="g v"/>
<line x1="236.39" y1="974.5" x2="236.39" y2="979" class="a"/>
<text x="238.79" y="991.2" class="xl">May</text>
<line x1="332.02" y1="740.5" x2="332.02" y2="974.5" class="g v"/>
<line x1="332.02" y1="974.5" x2="332.02" y2="979" class="a"/>
<text x="334.42" y="991.2" class="xl">Jul</text>
<line x1="429.23" y1="740.5" x2="429.23" y2="974.5" class="g v"/>
<line x1="429.23" y1="974.5" x2="429.23" y2="979" class="a"/>
<text x="431.63" y="991.2" class="xl">Sep</text>
<line x1="524.86" y1="740.5" x2="524.86" y2="974.5" class="g v"/>
<line x1="524.86" y1="974.5" x2="524.86" y2="979" class="a"/>
<text x="527.26" y="991.2" class="xl">Nov</text>
<line x1="620.5" y1="740.5" x2="620.5" y2="974.5" class="g v"/>
<line x1="620.5" y1="974.5" x2="620.5" y2="979" class="a"/>
<text x="622.9" y="991.2" class="xl b">2021</text>
<line x1="713" y1="740.5" x2="713" y2="974.5" class="g v"/>
<line x1="713" y1="974.5" x2="713" y2="979" class="a"/>
<text x="715.4" y="991.2" class="xl">Mar</text>
<line x1="808.63" y1="740.5" x2="808.63" y2="974.5" class="g v"/>
<line x1="808.63" y1="974.5" x2="808.63" y2="979" class="a"/>
<text x="811.03" y="991.2" class="xl">May</text>
<line x1="904.27" y1="740.5" x2="904.27" y2="974.5" class="g v"/>
<line x1="904.27" y1="974.5" x2="904.27" y2="979" class="a"/>
<text x="906.67" y="991.2" class="xl">Jul</text>
<line x1="1001.47" y1="740.5" x2="1001.47" y2="974.5" class="g v"/>
<line x1="1001.47" y1="974.5" x2="1001.47" y2="979" class="a"/>
<text x="1003.87" y="991.2" class="xl">Sep</text>
<line x1="1097.11" y1="740.5" x2="1097.11" y2="974.5" class="g v"/>
<line x1="1097.11" y1="974.5" x2="1097.11" y2="979" class="a"/>
<text x="1099.51" y="991.2" class="xl">Nov</text>
<line x1="1192.74" y1="740.5" x2="1192.74" y2="974.5" class="g v"/>
<line x1="1192.74" y1="974.5" x2="1192.74" y2="979" class="a"/>
<text x="1195.14" y="991.2" class="xl b">2022</text>
<line x1="1285.24" y1="740.5" x2="1285.24" y2="974.5" class="g v"/>
<line x1="1285.24" y1="974.5" x2="1285.24" y2="979" class="a"/>
<text x="1287.64" y="991.2" class="xl">Mar</text>
<line x1="1380.88" y1="740.5" x2="1380.88" y2="974.5" class="g v"/>
<line x1="1380.88" y1="974.5" x2="1380.88" y2="979" class="a"/>
<text x="1383.28" y="991.2" class="xl">May</text>
<line x1="1476.52" y1="740.5" x2="1476.52" y2="974.5" class="g v"/>
<line x1="1476.52" y1="974.5" x2="1476.52" y2="979" class="a"/>
<text x="1478.92" y="991.2" class="xl">Jul</text>
<line x1="1573.72" y1="740.5" x2="1573.72" y2="974.5" class="g v"/>
<line x1="1573.72" y1="974.5" x2="1573.72" y2="979" class="a"/>
<text x="1576.12" y="991.2" class="xl">Sep</text>
<line x1="1669.36" y1="740.5" x2="1669.36" y2="974.5" class="g v"/>
<line x1="1669.36" y1="974.5" x2="1669.36" y2="979" class="a"/>
<text x="1671.76" y="991.2" class="xl">Nov</text>
<line x1="1764.99" y1="740.5" x2="1764.99" y2="974.5" class="g v"/>
<line x1="1764.99" y1="974.5" x2="1764.99" y2="979" class="a"/>
<text x="1767.39" y="991.2" class="xl b">2023</text>
<line x1="1857.49" y1="740.5" x2="1857.49" y2="974.5" class="g v"/>
<line x1="1857.49" y1="974.5" x2="1857.49" y2="979" class="a"/>
<text x="1859.89" y="991.2" class="xl">Mar</text>
<line x1="86" y1="740.5" x2="86" y2="974.5" class="a"/>
<text transform="translate(42,857.5) rotate(-90)" class="yt">Weekly Doses Administered</text>
<g fill="#45a112">
<rect x="85.5" y="973" width="1.4" height="3.2" opacity="0.6"/>
<rect x="140.96" y="973" width="1.4" height="3.2" opacity="0.6"/>
<rect x="151.93" y="973" width="1.4" height="3.2" opacity="0.6"/>
<rect x="162.9" y="973" width="1.4" height="3.2" opacity="0.6"/>
<rect x="173.87" y="973" width="1.4" height="3.2" opacity="0.6"/>
<rect x="184.84" y="973" width="1.4" height="3.2" opacity="0.6"/>
<rect x="195.81" y="973" width="1.4" height="3.2" opacity="0.6"/>
<rect x="206.78" y="973" width="1.4" height="3.2" opacity="0.6"/>
<rect x="217.75" y="973" width="1.4" height="3.2" opacity="0.6"/>
<rect x="228.72" y="973" width="1.4" height="3.2" opacity="0.6"/>
<rect x="239.69" y="973" width="1.4" height="3.2" opacity="0.6"/>
<rect x="250.66" y="973" width="1.4" height="3.2" opacity="0.6"/>
<rect x="261.63" y="973" width="1.4" height="3.2" opacity="0.6"/>
<rect x="272.6" y="973" width="1.4" height="3.2" opacity="0.6"/>
<rect x="283.57" y="973" width="1.4" height="3.2" opacity="0.6"/>
<rect x="294.54" y="973" width="1.4" height="3.2" opacity="0.6"/>
<rect x="305.51" y="973" width="1.4" height="3.2" opacity="0.6"/>
<rect x="316.48" y="973" width="1.4" height="3.2" opacity="0.6"/>
<rect x="327.45" y="973" width="1.4" height="3.2" opacity="0.6"/>
<rect x="338.42" y="973" width="1.4" height="3.2" opacity="0.6"/>
<rect x="349.39" y="973" width="1.4" height="3.2" opacity="0.6"/>
<rect x="360.36" y="973" width="1.4" height="3.2" opacity="0.6"/>
<rect x="371.33" y="973" width="1.4" height="3.2" opacity="0.6"/>
<rect x="382.3" y="973" width="1.4" height="3.2" opacity="0.6"/>
<rect x="393.27" y="973" width="1.4" height="3.2" opacity="0.6"/>
<rect x="404.24" y="973" width="1.4" height="3.2" opacity="0.6"/>
<rect x="415.21" y="973" width="1.4" height="3.2" opacity="0.6"/>
<rect x="426.18" y="973" width="1.4" height="3.2" opacity="0.6"/>
<rect x="437.15" y="973" width="1.4" height="3.2" opacity="0.6"/>
<rect x="448.12" y="973" width="1.4" height="3.2" opacity="0.6"/>
<rect x="459.09" y="973" width="1.4" height="3.2" opacity="0.6"/>
<rect x="470.06" y="973" width="1.4" height="3.2" opacity="0.6"/>
<rect x="481.03" y="973" width="1.4" height="3.2" opacity="0.6"/>
<rect x="492" y="973" width="1.4" height="3.2" opacity="0.6"/>
<rect x="502.97" y="973" width="1.4" height="3.2" opacity="0.6"/>
<rect x="513.94" y="973" width="1.4" height="3.2" opacity="0.6"/>
<rect x="524.91" y="973" width="1.4" height="3.2" opacity="0.6"/>
<rect x="535.88" y="973" width="1.4" height="3.2" opacity="0.6"/>
<rect x="546.85" y="973" width="1.4" height="3.2" opacity="0.6"/>
<rect x="557.82" y="973" width="1.4" height="3.2" opacity="0.6"/>
<rect x="568.79" y="973" width="1.4" height="3.2" opacity="0.6"/>
<rect x="579.76" y="973" width="1.4" height="3.2" opacity="0.6"/>
<rect x="590.73" y="973" width="1.4" height="3.2" opacity="0.6"/>
<rect x="601.7" y="973" width="1.4" height="3.2" opacity="0.6"/>
<rect x="612.67" y="973" width="1.4" height="3.2" opacity="0.6"/>
<rect x="622.44" y="964.75" width="3.8" height="11.45"/>
<rect x="633.41" y="960.25" width="3.8" height="15.95"/>
<rect x="644.38" y="962.75" width="3.8" height="13.45"/>
<rect x="655.35" y="967.25" width="3.8" height="8.95"/>
<rect x="666.32" y="961.5" width="3.8" height="14.7"/>
<rect x="677.29" y="960.25" width="3.8" height="15.95"/>
<rect x="688.26" y="960.25" width="3.8" height="15.95"/>
<rect x="699.23" y="955.25" width="3.8" height="20.95"/>
<rect x="710.2" y="947.25" width="3.8" height="28.95"/>
<rect x="721.17" y="946.5" width="3.8" height="29.7"/>
<rect x="732.14" y="950.75" width="3.8" height="25.45"/>
<rect x="743.11" y="950" width="3.8" height="26.2"/>
<rect x="754.08" y="950.75" width="3.8" height="25.45"/>
<rect x="765.05" y="945.5" width="3.8" height="30.7"/>
<rect x="776.02" y="941.25" width="3.8" height="34.95"/>
<rect x="786.99" y="918.5" width="3.8" height="57.7"/>
<rect x="797.96" y="923" width="3.8" height="53.2"/>
<rect x="808.93" y="921.25" width="3.8" height="54.95"/>
<rect x="819.9" y="896.75" width="3.8" height="79.45"/>
<rect x="830.87" y="896.75" width="3.8" height="79.45"/>
<rect x="841.84" y="890.5" width="3.8" height="85.7"/>
<rect x="852.81" y="897.75" width="3.8" height="78.45"/>
<rect x="863.78" y="889.75" width="3.8" height="86.45"/>
<rect x="874.75" y="869.75" width="3.8" height="106.45"/>
<rect x="885.72" y="870.75" width="3.8" height="105.45"/>
<rect x="896.69" y="875.25" width="3.8" height="100.95"/>
<rect x="907.66" y="873.5" width="3.8" height="102.7"/>
<rect x="918.63" y="857.25" width="3.8" height="118.95"/>
<rect x="929.6" y="849.25" width="3.8" height="126.95"/>
<rect x="940.57" y="856.25" width="3.8" height="119.95"/>
<rect x="951.54" y="886.25" width="3.8" height="89.95"/>
<rect x="962.51" y="896" width="3.8" height="80.2"/>
<rect x="973.48" y="884.25" width="3.8" height="91.95"/>
<rect x="984.45" y="910.25" width="3.8" height="65.95"/>
<rect x="995.42" y="932.75" width="3.8" height="43.45"/>
<rect x="1006.39" y="947.25" width="3.8" height="28.95"/>
<rect x="1017.36" y="957.25" width="3.8" height="18.95"/>
<rect x="1028.33" y="957.25" width="3.8" height="18.95"/>
<rect x="1039.3" y="961" width="3.8" height="15.2"/>
<rect x="1050.27" y="963.5" width="3.8" height="12.7"/>
<rect x="1061.24" y="962.75" width="3.8" height="13.45"/>
<rect x="1072.21" y="961.75" width="3.8" height="14.45"/>
<rect x="1083.18" y="951" width="3.8" height="25.2"/>
<rect x="1094.15" y="951" width="3.8" height="25.2"/>
<rect x="1105.12" y="952" width="3.8" height="24.2"/>
<rect x="1116.09" y="945.75" width="3.8" height="30.45"/>
<rect x="1127.06" y="937.5" width="3.8" height="38.7"/>
<rect x="1138.03" y="924" width="3.8" height="52.2"/>
<rect x="1149" y="916.75" width="3.8" height="59.45"/>
<rect x="1159.97" y="889.75" width="3.8" height="86.45"/>
<rect x="1170.94" y="777.25" width="3.8" height="198.95"/>
<rect x="1181.91" y="840.25" width="3.8" height="135.95"/>
<rect x="1192.88" y="880.75" width="3.8" height="95.45"/>
<rect x="1203.85" y="879.75" width="3.8" height="96.45"/>
<rect x="1214.82" y="910.5" width="3.8" height="65.7"/>
<rect x="1225.79" y="930.25" width="3.8" height="45.95"/>
<rect x="1236.76" y="952" width="3.8" height="24.2"/>
<rect x="1247.73" y="963.5" width="3.8" height="12.7"/>
<rect x="1258.7" y="967.25" width="3.8" height="8.95"/>
<rect x="1269.67" y="969.75" width="3.8" height="6.45"/>
<rect x="1280.64" y="969.75" width="3.8" height="6.45"/>
<rect x="1291.61" y="971" width="3.8" height="5.2"/>
<rect x="1302.58" y="971.75" width="3.8" height="4.75"/>
<rect x="1313.55" y="971.75" width="3.8" height="4.75"/>
<rect x="1324.52" y="971.75" width="3.8" height="4.75"/>
<rect x="1335.49" y="972.25" width="3.8" height="4.25"/>
<rect x="1346.46" y="972.25" width="3.8" height="4.25"/>
<rect x="1357.43" y="972.25" width="3.8" height="4.25"/>
<rect x="1368.4" y="972.25" width="3.8" height="4.25"/>
<rect x="1379.37" y="972.25" width="3.8" height="4.25"/>
<rect x="1390.34" y="972.25" width="3.8" height="4.25"/>
<rect x="1401.31" y="972.25" width="3.8" height="4.25"/>
<rect x="1412.28" y="972.25" width="3.8" height="4.25"/>
<rect x="1423.25" y="972.25" width="3.8" height="4.25"/>
<rect x="1434.22" y="972.25" width="3.8" height="4.25"/>
<rect x="1445.19" y="972.25" width="3.8" height="4.25"/>
<rect x="1456.16" y="972.25" width="3.8" height="4.25"/>
<rect x="1467.13" y="972.25" width="3.8" height="4.25"/>
<rect x="1478.1" y="972.25" width="3.8" height="4.25"/>
<rect x="1489.07" y="972.25" width="3.8" height="4.25"/>
<rect x="1500.04" y="972.25" width="3.8" height="4.25"/>
<rect x="1512.21" y="973" width="1.4" height="3.2" opacity="0.6"/>
<rect x="1523.18" y="973" width="1.4" height="3.2" opacity="0.6"/>
<rect x="1534.15" y="973" width="1.4" height="3.2" opacity="0.6"/>
<rect x="1545.12" y="973" width="1.4" height="3.2" opacity="0.6"/>
<rect x="1556.09" y="973" width="1.4" height="3.2" opacity="0.6"/>
<rect x="1567.06" y="973" width="1.4" height="3.2" opacity="0.6"/>
<rect x="1578.03" y="973" width="1.4" height="3.2" opacity="0.6"/>
<rect x="1589" y="973" width="1.4" height="3.2" opacity="0.6"/>
<rect x="1599.97" y="973" width="1.4" height="3.2" opacity="0.6"/>
<rect x="1610.94" y="973" width="1.4" height="3.2" opacity="0.6"/>
<rect x="1621.91" y="973" width="1.4" height="3.2" opacity="0.6"/>
<rect x="1631.68" y="972.25" width="3.8" height="4.25"/>
<rect x="1642.65" y="972.25" width="3.8" height="4.25"/>
<rect x="1653.62" y="972.25" width="3.8" height="4.25"/>
<rect x="1664.59" y="972.25" width="3.8" height="4.25"/>
<rect x="1675.56" y="972.25" width="3.8" height="4.25"/>
<rect x="1686.53" y="972.25" width="3.8" height="4.25"/>
<rect x="1698.7" y="973" width="1.4" height="3.2" opacity="0.6"/>
<rect x="1709.67" y="973" width="1.4" height="3.2" opacity="0.6"/>
<rect x="1720.64" y="973" width="1.4" height="3.2" opacity="0.6"/>
<rect x="1731.61" y="973" width="1.4" height="3.2" opacity="0.6"/>
<rect x="1742.58" y="973" width="1.4" height="3.2" opacity="0.6"/>
<rect x="1753.55" y="973" width="1.4" height="3.2" opacity="0.6"/>
<rect x="1764.52" y="973" width="1.4" height="3.2" opacity="0.6"/>
<rect x="1775.49" y="973" width="1.4" height="3.2" opacity="0.6"/>
<rect x="1786.46" y="973" width="1.4" height="3.2" opacity="0.6"/>
<rect x="1797.43" y="973" width="1.4" height="3.2" opacity="0.6"/>
<rect x="1808.4" y="973" width="1.4" height="3.2" opacity="0.6"/>
<rect x="1819.37" y="973" width="1.4" height="3.2" opacity="0.6"/>
<rect x="1830.34" y="973" width="1.4" height="3.2" opacity="0.6"/>
<rect x="1841.31" y="973" width="1.4" height="3.2" opacity="0.6"/>
<rect x="1852.28" y="973" width="1.4" height="3.2" opacity="0.6"/>
<rect x="1863.25" y="973" width="1.4" height="3.2" opacity="0.6"/>
</g>
<line x1="81" y1="974.5" x2="1866.5" y2="974.5" class="a x"/>
</svg>

<!-- collapse -->
<div class="abs" style="left:1884px;top:141px;width:19px;height:19px;background:#2b2b2b;"></div>
<svg class="abs" style="left:1885px;top:138.4px;" width="18" height="18" viewBox="0 0 18 18"><circle cx="9" cy="8.5" r="7.3" fill="#2b2b2b" stroke="#8a8a8a" stroke-width="1"/><path d="M5.5 5 L7.5 7 M7.5 5 L7.5 7 L5.5 7 M12.5 5 L10.5 7 M10.5 5 L10.5 7 L12.5 7 M5.5 12 L7.5 10 M7.5 12 L7.5 10 L5.5 10 M12.5 12 L10.5 10 M10.5 12 L10.5 10 L12.5 10" fill="none" stroke="#a5a5a5" stroke-width="1"/></svg>

<!-- tabs -->
<div class="abs tab" style="left:22px;width:72px;background:#2b2b2b;border-left:1px solid #363636;border-right:1px solid #363636;border-bottom:2px solid #2786c6;">Weekly</div>
<div class="abs tab" style="left:101px;width:72px;background:#353535;border:1px solid #414141;line-height:29px;">28-Day</div>

<div id="foot" class="abs"></div>
<div id="scroll" class="abs"></div>
<div id="thumb" class="abs"></div>
<svg class="abs" style="left:1903px;top:0;" width="17" height="1080" viewBox="0 0 17 1080"><path d="M4.5 11.5 L8.5 6.5 L12.5 11.5 Z" fill="#505050"/><path d="M4.5 1068.5 L8.5 1073.5 L12.5 1068.5 Z" fill="#505050"/></svg>
<div class="abs" style="left:1860px;top:159px;width:59.6px;height:24.6px;box-sizing:border-box;background:#fff;border:1px solid #2a2a2a;color:#4a4a4a;font-size:12px;letter-spacing:-0.35px;line-height:24.4px;padding-left:6.3px;white-space:nowrap;">Collapse</div>
</body>
</html>
